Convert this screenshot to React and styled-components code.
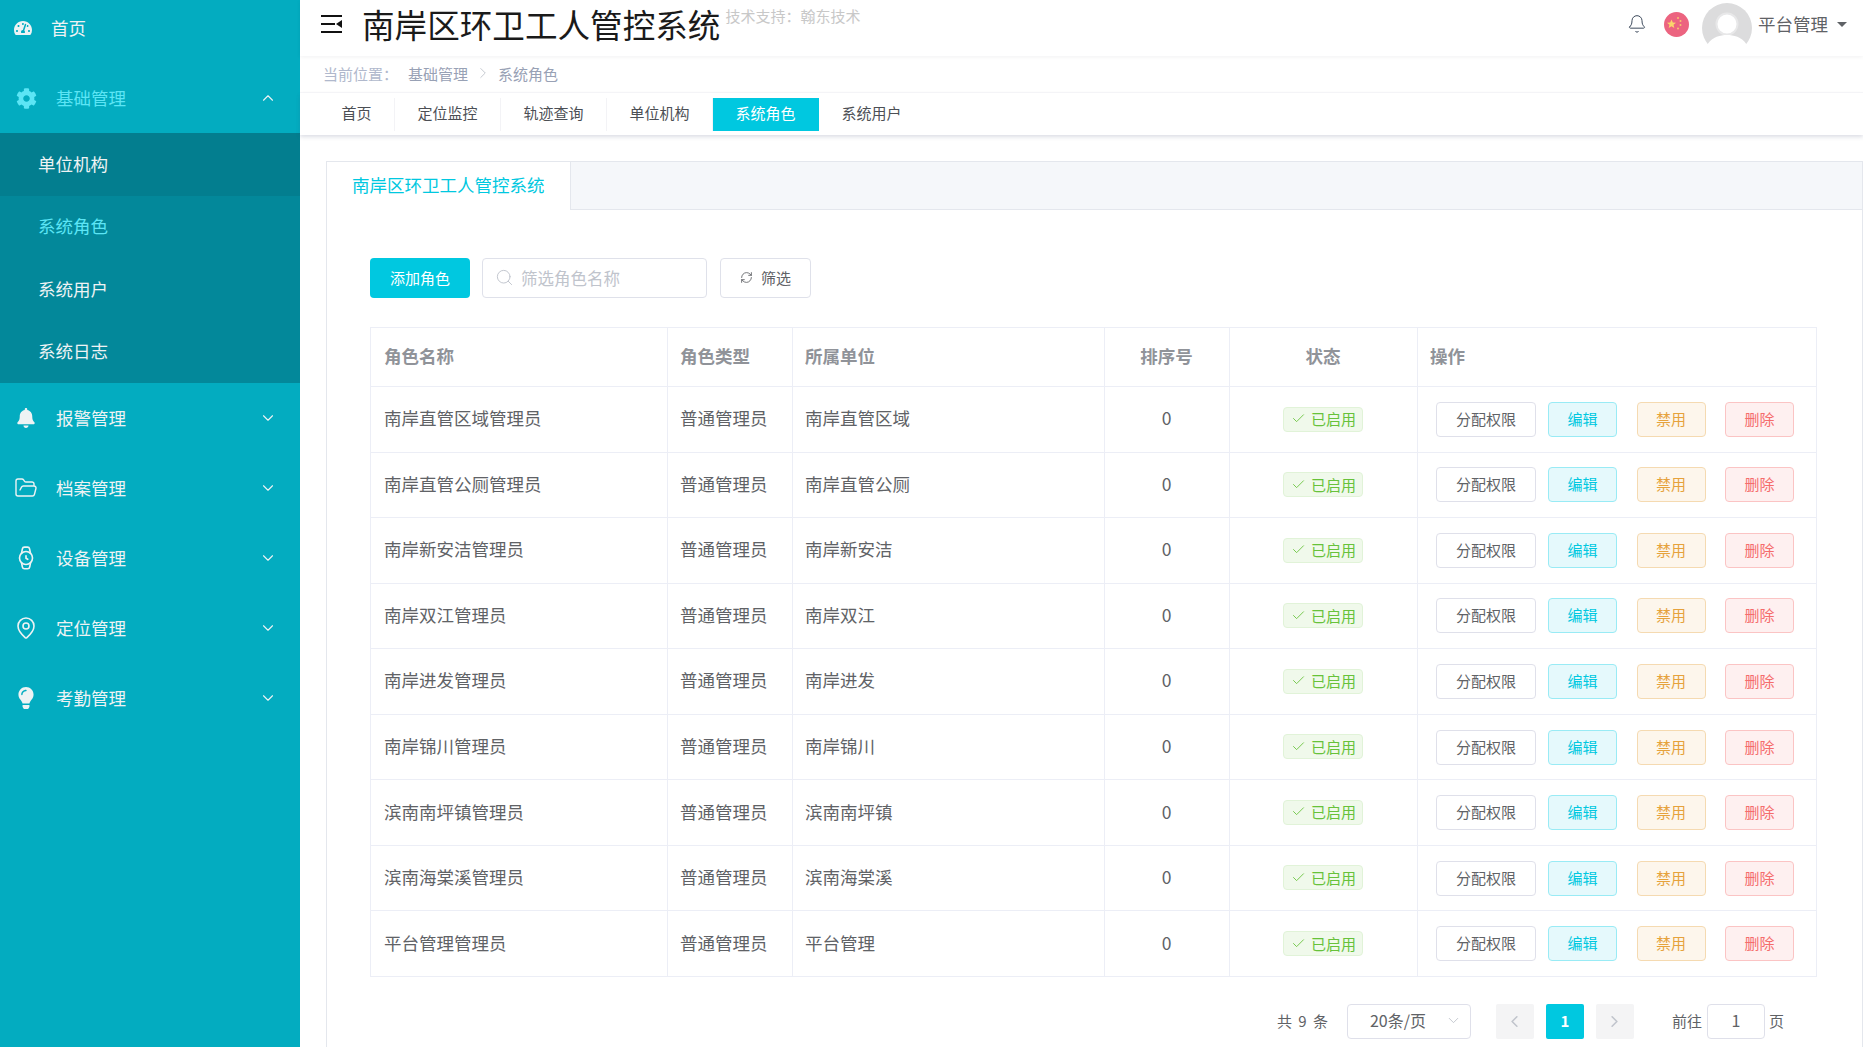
import styled, { createGlobalStyle } from 'styled-components';
import { FaBell, FaCog, FaLightbulb, FaTachometerAlt } from 'react-icons/fa';
import {
  Bell,
  Check,
  ChevronDown,
  ChevronLeft,
  ChevronRight,
  ChevronUp,
  FolderOpen,
  MapPin,
  RefreshCw,
  Search,
  Watch,
} from 'lucide-react';

const roles = [
  ['南岸直管区域管理员', '南岸直管区域'],
  ['南岸直管公厕管理员', '南岸直管公厕'],
  ['南岸新安洁管理员', '南岸新安洁'],
  ['南岸双江管理员', '南岸双江'],
  ['南岸进发管理员', '南岸进发'],
  ['南岸锦川管理员', '南岸锦川'],
  ['滨南南坪镇管理员', '滨南南坪镇'],
  ['滨南海棠溪管理员', '滨南海棠溪'],
  ['平台管理管理员', '平台管理'],
];

const GlobalStyle = createGlobalStyle`
  html, body {
    margin: 0;
    height: 100%;
    overflow: hidden;
    background: #fff;
    font-family: "Noto Sans CJK SC", "Liberation Sans", sans-serif;
  }
  * {
    box-sizing: border-box;
  }
`;

const Page = styled.div`
  display: flex;
  width: 1863px;
  height: 1047px;
  overflow: hidden;
`;

const Sidebar = styled.aside`
  width: 300px;
  flex: none;
  background: #03acc0;
  overflow: hidden;
`;

const Menu = styled.nav`
  margin-top: -7px;
`;

const MenuItem = styled.div`
  display: flex;
  align-items: center;
  height: 70px;
  padding-left: ${(p) => (p.$home ? '13px' : '16px')};
  padding-right: 23px;
  color: ${(p) => (p.$open ? '#5ce5f5' : '#eef3f4')};
  font-size: 17.5px;
`;

const MenuIcon = styled.span`
  display: flex;
  align-items: center;
  justify-content: center;
  width: 20px;
  height: 22px;
  margin-right: ${(p) => (p.$home ? '18px' : '20px')};
  svg {
    flex: none;
  }
`;

const MenuLabel = styled.span`
  flex: 1;
  padding-bottom: 2px;
`;

const SubMenu = styled.div`
  background: #03889a;
`;

const SubItem = styled.div`
  display: flex;
  align-items: center;
  height: 62.5px;
  padding: 0 0 2px 38px;
  font-size: 17.5px;
  color: ${(p) => (p.$active ? '#5ce5f5' : '#eef3f4')};
  background: ${(p) => (p.$hover ? '#037e8f' : 'transparent')};
`;

const Main = styled.div`
  flex: 1;
  min-width: 0;
  display: flex;
  flex-direction: column;
`;

const Header = styled.header`
  display: flex;
  align-items: center;
  height: 56px;
  padding: 0 16px 8px 21px;
  box-shadow: 0 1px 4px rgba(0, 21, 41, 0.06);
`;

const Title = styled.h1`
  margin: 0 0 0 20px;
  font-size: 32.6px;
  font-weight: 400;
  line-height: 48px;
  color: #1a1a1a;
  white-space: nowrap;
`;

const Support = styled.span`
  align-self: flex-start;
  margin: 6px 0 0 5px;
  font-size: 15px;
  line-height: 20px;
  color: #c8c8c8;
`;

const HeaderRight = styled.div`
  display: flex;
  align-items: center;
  align-self: stretch;
  margin-left: auto;
  color: #5f6266;
`;

const Flag = styled.svg`
  width: 25px;
  height: 25px;
  margin: 0 13px 0 17px;
`;

const Avatar = styled.svg`
  width: 50px;
  height: 41px;
  margin: 3px 6px 0 0;
  align-self: flex-start;
`;

const UserName = styled.span`
  padding-bottom: 2px;
  font-size: 17.5px;
`;

const Caret = styled.span`
  width: 0;
  height: 0;
  margin-left: 9px;
  border-left: 5px solid transparent;
  border-right: 5px solid transparent;
  border-top: 5px solid #5f6266;
`;

const Breadcrumb = styled.div`
  display: flex;
  align-items: center;
  height: 37px;
  padding: 0 0 2px 23px;
  border-bottom: 1px solid #f8f8fa;
  font-size: 15px;
  color: #98a1b5;
`;

const CrumbLead = styled.span`
  margin-right: 10px;
  color: #b0b8cc;
`;

const CrumbSep = styled.span`
  display: flex;
  margin: 0 6px;
  color: #c0c4cc;
`;

const TabBar = styled.div`
  display: flex;
  flex: none;
  height: 42px;
  padding: 5px 0 4px 19px;
  box-shadow: 0 2px 4px rgba(60, 70, 110, 0.18);
`;

const Tab = styled.div`
  display: flex;
  align-items: center;
  padding: 0 22.5px 4px;
  font-size: 15px;
  color: ${(p) => (p.$active ? '#fff' : '#4c4f55')};
  background: ${(p) => (p.$active ? '#00c8e0' : 'transparent')};
  border-right: 1px solid ${(p) => (p.$active || p.$last ? 'transparent' : '#f3f3f6')};
`;

const Content = styled.main`
  flex: 1;
  min-height: 0;
  padding: 26px 0 0 26px;
`;

const Card = styled.section`
  height: 100%;
  border: 1px solid #e4e7ed;
  border-bottom: 0;
`;

const CardTabs = styled.div`
  display: flex;
  height: 48px;
  background: #f5f7fa;
  border-bottom: 1px solid #e4e7ed;
`;

const CardTab = styled.div`
  display: flex;
  align-items: center;
  height: 48px;
  padding: 0 25px 3px;
  font-size: 17.5px;
  color: #00c8e0;
  background: #fff;
  border-right: 1px solid #e4e7ed;
`;

const CardBody = styled.div`
  padding: 48px 46px 0 43px;
`;

const Toolbar = styled.div`
  display: flex;
  height: 40px;
  margin-bottom: 29px;
`;

const PrimaryButton = styled.button`
  width: 100px;
  margin-right: 12px;
  padding: 0 0 2px;
  border: 0;
  border-radius: 4px;
  background: #00c8e0;
  color: #fff;
  font: inherit;
  font-size: 15px;
`;

const SearchBox = styled.div`
  display: flex;
  align-items: center;
  width: 225px;
  margin-right: 13px;
  padding: 0 0 1px 12px;
  border: 1px solid #dfe1ea;
  border-radius: 4px;
  color: #c0c4cc;
  font-size: 16.5px;
  svg {
    margin-right: 7px;
  }
`;

const FilterButton = styled.button`
  display: flex;
  align-items: center;
  justify-content: center;
  gap: 8px;
  width: 91px;
  padding: 0 0 1px;
  border: 1px solid #dfe1ea;
  border-radius: 4px;
  background: #fff;
  color: #606266;
  font: inherit;
  font-size: 15px;
`;

const Table = styled.table`
  width: 1446px;
  table-layout: fixed;
  border-collapse: collapse;
  font-size: 17.5px;
  color: #606266;
  th, td {
    border: 1px solid #eceef6;
    padding: 0 13px 3px;
    text-align: left;
  }
  th + th, td + td {
    padding-left: 12px;
  }
  th {
    height: 59px;
    font-weight: 700;
    color: #909399;
  }
  td {
    height: 65.55px;
  }
`;

const CenterCell = styled.td`
  && {
    text-align: center;
  }
`;

const CenterHead = styled.th`
  && {
    text-align: center;
  }
`;

const StatusTag = styled.span`
  display: inline-flex;
  align-items: center;
  gap: 5px;
  height: 25px;
  padding: 0 6px 1px 7px;
  border: 1px solid #e1f3d8;
  border-radius: 4px;
  background: #f0f9eb;
  color: #67c23a;
  font-size: 15px;
  vertical-align: middle;
`;

const ActionCell = styled.td`
  && {
    padding: 0 0 0 18px;
  }
`;

const Actions = styled.div`
  display: flex;
  gap: 19.5px;
`;

const ActionButton = styled.button`
  height: 35px;
  width: ${(p) => (p.$wide ? '100px' : '69px')};
  margin-right: ${(p) => (p.$wide ? '-7.5px' : '0')};
  padding: 0 0 2px;
  border: 1px solid ${(p) => p.$border || '#dfe0ea'};
  border-radius: 4px;
  background: ${(p) => p.$bg || '#fff'};
  color: ${(p) => p.$color || '#606266'};
  font: inherit;
  font-size: 15px;
`;

const Pagination = styled.div`
  display: flex;
  align-items: center;
  justify-content: flex-end;
  height: 35px;
  margin-top: 27px;
  padding-right: 32px;
  font-size: 15px;
  color: #606266;
`;

const PagerText = styled.span`
  padding-bottom: 2px;
`;

const Total = styled(PagerText)`
  margin-right: 19px;
  word-spacing: 3px;
`;

const PageSize = styled.div`
  display: flex;
  align-items: center;
  justify-content: space-between;
  width: 124px;
  height: 35px;
  margin-right: 25px;
  padding: 0 8px 2px 22px;
  border: 1px solid #dfe0ea;
  border-radius: 4px;
  font-size: 16px;
  svg {
    color: #c0c4cc;
  }
`;

const PageButton = styled.div`
  display: flex;
  align-items: center;
  justify-content: center;
  width: 38px;
  height: 35px;
  margin-right: 12px;
  padding-bottom: ${(p) => (p.$active ? '2px' : '0')};
  border-radius: 2px;
  background: ${(p) => (p.$active ? '#00c8e0' : '#f4f4f5')};
  color: ${(p) => (p.$active ? '#fff' : '#c0c4cc')};
  font-weight: ${(p) => (p.$active ? 700 : 400)};
`;

const GoLabel = styled(PagerText)`
  margin-left: 26px;
`;

const PageInput = styled.div`
  display: flex;
  align-items: center;
  justify-content: center;
  width: 58px;
  height: 35px;
  margin: 0 4px 0 5px;
  padding-bottom: 2px;
  border: 1px solid #dfe0ea;
  border-radius: 4px;
  font-size: 16px;
`;

const menusBelow = [
  ['报警管理', <FaBell size={20} />],
  ['档案管理', <FolderOpen size={24} strokeWidth={1.4} />],
  ['设备管理', <Watch size={26} strokeWidth={1.5} />],
  ['定位管理', <MapPin size={24} strokeWidth={1.6} />],
  ['考勤管理', <FaLightbulb size={22} />],
];

const tabs = ['首页', '定位监控', '轨迹查询', '单位机构', '系统角色', '系统用户'];

const App = () => {
  return (
    <Page>
      <GlobalStyle />
      <Sidebar>
        <Menu>
          <MenuItem $home>
            <MenuIcon $home>
              <FaTachometerAlt size={18} />
            </MenuIcon>
            <MenuLabel>首页</MenuLabel>
          </MenuItem>
          <MenuItem $open>
            <MenuIcon>
              <FaCog size={21} />
            </MenuIcon>
            <MenuLabel>基础管理</MenuLabel>
            <ChevronUp size={18} strokeWidth={1.5} color="#eef3f4" />
          </MenuItem>
          <SubMenu>
            <SubItem $hover>单位机构</SubItem>
            <SubItem $active>系统角色</SubItem>
            <SubItem>系统用户</SubItem>
            <SubItem>系统日志</SubItem>
          </SubMenu>
          {menusBelow.map(([label, icon]) => (
            <MenuItem key={label}>
              <MenuIcon>{icon}</MenuIcon>
              <MenuLabel>{label}</MenuLabel>
              <ChevronDown size={18} strokeWidth={1.5} />
            </MenuItem>
          ))}
        </Menu>
      </Sidebar>
      <Main>
        <Header>
          <svg width="21" height="18" viewBox="0 0 21 18" fill="#111">
            <path d="M0 0h21v2H0zM0 8h14v2H0zM0 16h21v2H0zM21 5v8l-6-4z" />
          </svg>
          <Title>南岸区环卫工人管控系统</Title>
          <Support>技术支持：翰东技术</Support>
          <HeaderRight>
            <Bell size={20} strokeWidth={1.2} color="#3d4a5c" />
            <Flag viewBox="0 0 25 25">
              <circle cx="12.5" cy="12.5" r="12.5" fill="#ec6480" />
              <path
                d="M7.5 7.5l1.3 3 3.2.2-2.5 2.1.8 3.1-2.8-1.7-2.8 1.7.8-3.1L3 10.7l3.2-.2z"
                fill="#fbd66c"
              />
              <circle cx="14" cy="6" r="1" fill="#f8c56f" />
              <circle cx="16.5" cy="9" r="1" fill="#f8c56f" />
              <circle cx="16.5" cy="13" r="1" fill="#f8c56f" />
              <circle cx="14" cy="16.5" r="1" fill="#f8c56f" />
            </Flag>
            <Avatar viewBox="0 0 50 41">
              <defs>
                <clipPath id="avatarClip">
                  <circle cx="25" cy="25" r="25" />
                </clipPath>
              </defs>
              <g clipPath="url(#avatarClip)">
                <rect width="50" height="50" fill="#dcdcdd" />
                <circle cx="25" cy="21" r="10.5" fill="#fff" stroke="#e8e8e9" strokeWidth="2" />
                <path d="M5 42C10 34 18 32 25 32S40 34 45 42V50H5z" fill="#fff" />
              </g>
            </Avatar>
            <UserName>平台管理</UserName>
            <Caret />
          </HeaderRight>
        </Header>
        <Breadcrumb>
          <CrumbLead>当前位置：</CrumbLead>
          基础管理
          <CrumbSep>
            <ChevronRight size={18} strokeWidth={1.2} />
          </CrumbSep>
          系统角色
        </Breadcrumb>
        <TabBar>
          {tabs.map((t, i) => (
            <Tab key={t} $active={t === '系统角色'} $last={i === tabs.length - 1}>
              {t}
            </Tab>
          ))}
        </TabBar>
        <Content>
          <Card>
            <CardTabs>
              <CardTab>南岸区环卫工人管控系统</CardTab>
            </CardTabs>
            <CardBody>
              <Toolbar>
                <PrimaryButton>添加角色</PrimaryButton>
                <SearchBox>
                  <Search size={19} strokeWidth={1.2} />
                  筛选角色名称
                </SearchBox>
                <FilterButton>
                  <RefreshCw size={13} strokeWidth={1.6} />
                  筛选
                </FilterButton>
              </Toolbar>
              <Table>
                <colgroup>
                  <col width="297" />
                  <col width="125" />
                  <col width="312" />
                  <col width="125" />
                  <col width="188" />
                  <col width="399" />
                </colgroup>
                <thead>
                  <tr>
                    <th>角色名称</th>
                    <th>角色类型</th>
                    <th>所属单位</th>
                    <CenterHead>排序号</CenterHead>
                    <CenterHead>状态</CenterHead>
                    <th>操作</th>
                  </tr>
                </thead>
                <tbody>
                  {roles.map(([name, unit]) => (
                    <tr key={name}>
                      <td>{name}</td>
                      <td>普通管理员</td>
                      <td>{unit}</td>
                      <CenterCell>0</CenterCell>
                      <CenterCell>
                        <StatusTag>
                          <Check size={15} strokeWidth={1.4} />
                          已启用
                        </StatusTag>
                      </CenterCell>
                      <ActionCell>
                        <Actions>
                          <ActionButton $wide>分配权限</ActionButton>
                          <ActionButton $bg="#e5f9fc" $border="#99ebf5" $color="#00c8e0">
                            编辑
                          </ActionButton>
                          <ActionButton $bg="#fdf6ec" $border="#f5dab1" $color="#e6a23c">
                            禁用
                          </ActionButton>
                          <ActionButton $bg="#fef0f0" $border="#fbc4c4" $color="#f56c6c">
                            删除
                          </ActionButton>
                        </Actions>
                      </ActionCell>
                    </tr>
                  ))}
                </tbody>
              </Table>
              <Pagination>
                <Total>共 9 条</Total>
                <PageSize>
                  20条/页
                  <ChevronDown size={17} strokeWidth={1.3} />
                </PageSize>
                <PageButton>
                  <ChevronLeft size={19} strokeWidth={2} />
                </PageButton>
                <PageButton $active>1</PageButton>
                <PageButton>
                  <ChevronRight size={19} strokeWidth={2} />
                </PageButton>
                <GoLabel>前往</GoLabel>
                <PageInput>1</PageInput>
                <PagerText>页</PagerText>
              </Pagination>
            </CardBody>
          </Card>
        </Content>
      </Main>
    </Page>
  );
};

export default App;
